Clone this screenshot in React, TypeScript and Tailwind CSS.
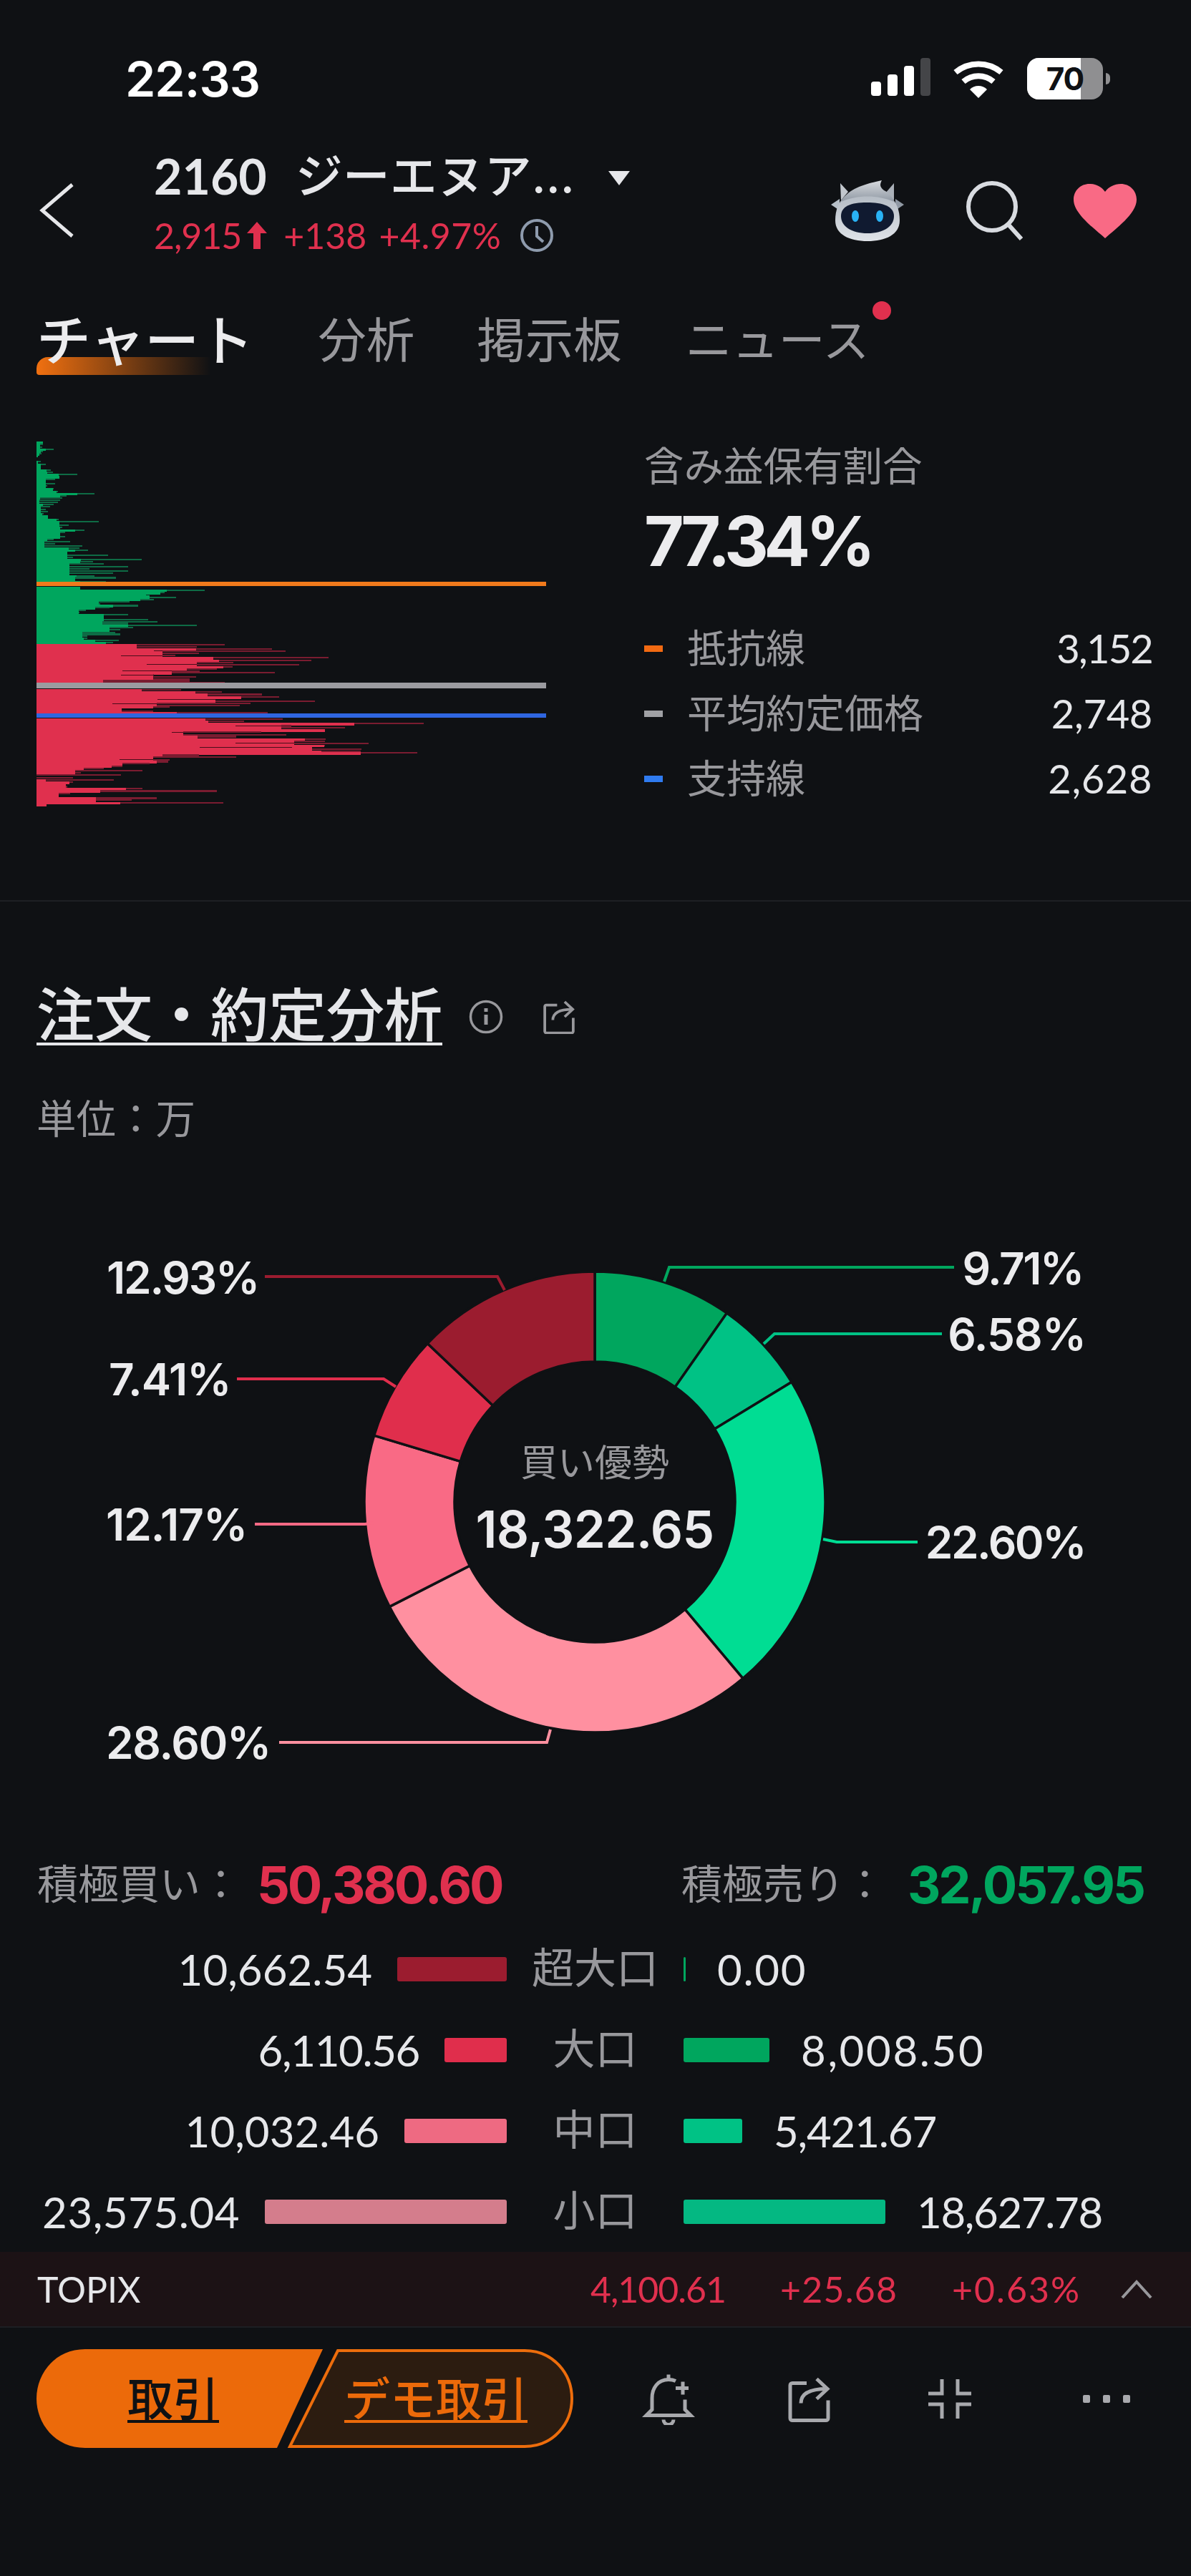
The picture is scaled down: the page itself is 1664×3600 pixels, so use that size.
import React from "react";

// [y, bright end, dark end] in the profile's own units
const GREEN_ROWS: number[][] = [
  [103,118,118],[112,110,118],[121,104,115],[130,125,147],[139,112,118],[148,108,114],[157,104,104],
  [178,104,112],[190,112,125],[199,104,108],[212,128,140],[220,130,145],[229,160,212],[236,162,162],
  [247,125,150],[255,118,125],[265,125,150],[273,118,130],[285,145,148],[295,155,158],[304,212,258],
  [312,165,182],[322,110,170],[330,108,165],[338,105,158],[346,118,148],[354,105,138],[365,112,125],
  [375,110,132],[383,115,120],[392,132,132],[405,155,160],[413,162,270],[427,160,188],[436,165,170],
  [447,205,232],[455,165,178],[463,112,112],[471,165,178],[482,130,148],[491,122,192],[500,112,150],
  [509,122,225],[517,188,218],[526,205,242],[534,110,140],[545,185,297],[553,185,200],[561,222,388],
  [570,220,255],[578,190,285],[590,190,350],[598,185,245],[606,190,350],[614,155,310],[625,210,258],
  [633,205,318],[642,158,200],[648,220,290],[670,220,220],[682,457,560],[690,440,450],[700,400,410],
  [709,410,482],[718,385,422],[727,260,355],[736,270,275],[742,310,378],[750,260,300],[760,190,235],
  [769,215,218],[778,285,350],[787,260,285],[797,285,405],[805,280,432],[812,272,350],[820,350,540],
  [828,258,365],[836,300,330],[846,195,315],[854,225,330],[862,155,240],[870,230,240],[878,260,325],
  [886,290,310],
];

const RED_ROWS: number[][] = [
  [894,375,615],[902,375,540],[911,538,745],[919,422,782],[928,445,545],[937,332,480],[946,585,900],
  [955,600,852],[964,540,640],[972,402,820],[981,612,637],[989,512,595],[997,335,548],[1004,470,752],
  [1013,332,422],[1021,420,537],[1030,420,520],[1036,282,520],[1044,240,615],[1071,388,497],[1080,536,608],
  [1089,568,718],[1098,660,765],[1108,432,590],[1116,590,862],[1125,308,687],[1133,430,657],[1138,420,465],
  [1146,207,330],[1154,333,420],[1160,485,733],[1186,562,775],[1194,570,668],[1203,970,1160],[1212,645,798],
  [1220,770,945],[1229,890,890],[1237,470,715],[1246,502,785],[1254,542,648],[1263,835,892],[1272,805,890],
  [1280,645,1010],[1288,888,890],[1296,548,800],[1304,855,990],[1312,880,988],[1318,988,1143],[1327,445,545],
  [1335,420,647],[1344,328,465],[1352,430,460],[1360,335,410],[1370,305,335],[1378,230,285],[1387,200,390],
  [1395,205,222],[1405,100,332],[1414,100,200],[1423,125,312],[1432,190,200],[1442,175,175],[1450,180,185],
  [1458,345,390],[1467,275,595],[1476,160,192],[1486,100,160],[1495,262,430],[1503,170,360],[1512,330,612],
  [1520,128,128],
];

const SEGMENTS = [
  { pct: 9.71, color: "#00a65e" },
  { pct: 6.58, color: "#00c285" },
  { pct: 22.6, color: "#00dd93" },
  { pct: 28.6, color: "#ff90a0" },
  { pct: 12.17, color: "#f96a85" },
  { pct: 7.41, color: "#e02e4c" },
  { pct: 12.93, color: "#9b1c2f" },
];

const LEADERS = [
  { points: "370,1784 695,1784 705,1803", color: "#9b1c2f" },
  { points: "331,1927 536,1927 553,1938", color: "#e02e4c" },
  { points: "356,2130 510,2130 522,2128", color: "#f96a85" },
  { points: "390,2435 764,2435 769,2417", color: "#ff90a0" },
  { points: "928,1791 935,1771 1333,1771", color: "#00a65e" },
  { points: "1067,1878 1082,1864 1316,1864", color: "#00c285" },
  { points: "1150,2151 1169,2155 1282,2155", color: "#00dd93" },
];

const ROWS = [
  { buy: "10,662.54", buyW: "w-[153px]", buyC: "bg-[#9b1c2f]", buyT: "", name: "超大口", sell: "0.00", sellW: "w-[3px]", sellC: "bg-[#00a65e]", sellT: "tracking-[1.7px]" },
  { buy: "6,110.56", buyW: "w-[87px]", buyC: "bg-[#e02e4c]", buyT: "tracking-[-1.4px]", name: "大口", sell: "8,008.50", sellW: "w-[120px]", sellC: "bg-[#00a65e]", sellT: "tracking-[2.6px]" },
  { buy: "10,032.46", buyW: "w-[143px]", buyC: "bg-[#ee6a82]", buyT: "", name: "中口", sell: "5,421.67", sellW: "w-[82px]", sellC: "bg-[#00c285]", sellT: "tracking-[-1.2px]" },
  { buy: "23,575.04", buyW: "w-[338px]", buyC: "bg-[#d47d8c]", buyT: "tracking-[0.5px]", name: "小口", sell: "18,627.78", sellW: "w-[282px]", sellC: "bg-[#04b882]", sellT: "tracking-[-1.4px]" },
];

function segmentPath(from: number, to: number) {
  const [cx, cy, R, r] = [831, 2099, 322, 196];
  const a0 = (from / 100) * Math.PI * 2;
  const a1 = (to / 100) * Math.PI * 2;
  const pt = (rad: number, a: number) => `${cx + rad * Math.sin(a)} ${cy - rad * Math.cos(a)}`;
  const large = to - from > 50 ? 1 : 0;
  return `M${pt(R, a0)} A${R} ${R} 0 ${large} 1 ${pt(R, a1)} L${pt(r, a1)} A${r} ${r} 0 ${large} 0 ${pt(r, a0)} Z`;
}

const ShareIcon = ({ className }: { className: string }) => (
  <svg viewBox="0 0 63 64" fill="none" stroke="currentColor" strokeWidth="5" className={className}>
    <path d="M28 10H8a3 3 0 0 0-3 3v46a3 3 0 0 0 3 3h47a3 3 0 0 0 3-3V34" />
    <path d="M20 38c0-12 10-20 36-20" />
    <path d="M42 4l15 14-15 14" />
  </svg>
);

const Robot = () => (
  <svg viewBox="0 0 102 85" className="h-[85px] w-[102px]">
    <defs>
      <linearGradient id="helmet" x1="0" y1="0" x2="0" y2="1">
        <stop offset="0" stopColor="#d7dade" />
        <stop offset="1" stopColor="#8f98a3" />
      </linearGradient>
      <linearGradient id="shell" x1="0" y1="0" x2="0" y2="1">
        <stop offset="0" stopColor="#aeb6bf" />
        <stop offset="1" stopColor="#dfe3e8" />
      </linearGradient>
    </defs>
    <path d="M14 28 L13 4 L24 16 Z" fill="#c2c7cd" />
    <path d="M88 28 L88 4 L76 18 Z" fill="#aab0b8" />
    <path d="M0 34 L12 26 L12 42 Z" fill="#b7c0c9" />
    <path d="M102 34 L90 26 L90 42 Z" fill="#8f98a3" />
    <path d="M6 56C6 26 26 12 51 12s45 14 45 44c0 20-20 29-45 29S6 76 6 56Z" fill="url(#shell)" />
    <path d="M14 30C24 12 44 6 71 0c-3 6-3 9 3 14 8 4 12 10 14 16-22-10-52-10-74 0Z" fill="url(#helmet)" />
    <path d="M14 50c0-14 14-19 36-19s38 5 38 19-14 24-37 24-37-10-37-24Z" fill="#101a30" />
    <ellipse cx="34" cy="50" rx="5" ry="8" fill="#29b2f5" />
    <ellipse cx="68" cy="50" rx="5" ry="8" fill="#29b2f5" />
  </svg>
);

export default function App() {
  const num = "font-['Lato','Noto_Sans_CJK_JP',sans-serif]";
  let acc = 0;

  return (
    <div className="flex h-[3600px] w-[1664px] flex-col overflow-hidden bg-[#0f1114] font-['Inter','Noto_Sans_CJK_JP',sans-serif] text-[#e6e7ea]">
      {/* ステータスバー */}
      <div className="flex h-[200px] shrink-0 items-start justify-between pl-[175px] pr-[113px] pt-[81px]">
        <span className="text-[68px] font-semibold leading-[58px] tracking-[-1px] text-white">22:33</span>
        <div className="flex items-center">
          <div className="flex h-[58px] items-end gap-[9px] pb-[5px]">
            <div className="h-[20px] w-[14px] rounded-[4px] bg-white" />
            <div className="h-[30px] w-[14px] rounded-[4px] bg-white" />
            <div className="h-[42px] w-[14px] rounded-[4px] bg-white" />
            <div className="h-[53px] w-[14px] rounded-[4px] bg-[#444548]" />
          </div>
          <svg viewBox="0 0 72 53" className="ml-[31px] h-[53px] w-[72px]" fill="none" stroke="#fff" strokeWidth="8">
            <path d="M4 17A50 50 0 0 1 68 17" />
            <path d="M15 30A32 32 0 0 1 57 30" />
            <path d="M36 53L24 41A17 17 0 0 1 48 41Z" fill="#fff" stroke="none" />
          </svg>
          <div className="relative ml-[32px] flex h-[58px] w-[106px] items-center justify-center overflow-hidden rounded-[16px] bg-[#8f8f91]">
            <div className="absolute inset-y-0 left-0 w-[75px] bg-white" />
            <span className="relative text-[44px] font-bold tracking-[-1px] text-[#0f1114]">70</span>
          </div>
          <div className="ml-[4px] h-[16px] w-[6px] rounded-r-full bg-[#8f8f91]" />
        </div>
      </div>

      {/* ヘッダー */}
      <div className="relative flex h-[170px] shrink-0 items-start">
        <svg viewBox="0 0 48 76" className="ml-[55px] mt-[56px] h-[76px] w-[48px]" fill="none" stroke="#e6e7ea" strokeWidth="5">
          <path d="M46 2L4 38l42 36" />
        </svg>
        <div className="ml-[112px] flex flex-col pt-[18px]">
          <div className="flex h-[56px] items-center">
            <span className={`${num} text-[68px] font-bold`}>2160</span>
            <span className="ml-[40px] text-[66px] font-medium">ジーエヌア…</span>
            <svg viewBox="0 0 30 20" className="ml-[47px] mt-[6px] h-[20px] w-[30px]" fill="#e6e7ea">
              <path d="M0 0h30L15 20Z" />
            </svg>
          </div>
          <div className="mt-[30px] flex h-[50px] items-center text-[50px] text-[#e0304e]">
            <span className={`${num} tracking-[-1px]`}>2,915</span>
            <svg viewBox="0 0 28 38" className="ml-[8px] h-[38px] w-[28px]" fill="#e0304e">
              <path d="M14 0l14 16H19v22h-10V16H0Z" />
            </svg>
            <span className={`${num} ml-[23px]`}>+138</span>
            <span className={`${num} ml-[17px] tracking-[0.5px]`}>+4.97%</span>
            <svg viewBox="0 0 48 48" className="ml-[26px] h-[48px] w-[48px]" fill="none" stroke="#8e9bad" strokeWidth="4">
              <circle cx="24" cy="24" r="21" />
              <path d="M24 11v14l9 8" />
            </svg>
          </div>
        </div>
        <div className="ml-auto mr-[76px] mt-[52px] flex items-start">
          <Robot />
          <svg viewBox="0 0 80 84" className="ml-[86px] h-[84px] w-[80px]" fill="none" stroke="#d8dbe0" strokeWidth="6">
            <circle cx="37" cy="37" r="33" />
            <path d="M60 62l18 20" />
          </svg>
          <svg viewBox="0 0 88 76" className="ml-[71px] mt-[5px] h-[76px] w-[88px]" fill="#f96a85">
            <path d="M44 76C30 63 0 42 0 22 0 9 10 0 22 0c9 0 17 4 22 11C49 4 57 0 66 0c12 0 22 9 22 22 0 20-30 41-44 54Z" />
          </svg>
        </div>
      </div>

      {/* タブ */}
      <div className="flex h-[190px] shrink-0 items-start pl-[51px] pt-[70px] text-[#98989c]">
        <div className="relative h-[72px]">
          <div className="absolute left-0 top-[59px] h-[25px] w-[244px] rounded-bl-[4px] rounded-tl-[16px] bg-gradient-to-r from-[#f07010] to-transparent" />
          <span className="relative block text-[76px] font-medium leading-[72px] text-[#ececee]">チャート</span>
        </div>
        <span className="ml-[90px] text-[67.5px] leading-[72px]">分析</span>
        <span className="ml-[87px] text-[67.5px] leading-[72px]">掲示板</span>
        <div className="relative ml-[89px]">
          <span className="text-[65px] leading-[72px]">ニュース</span>
          <div className="absolute right-[-30px] top-[-19px] h-[26px] w-[26px] rounded-full bg-[#e0304e]" />
        </div>
      </div>

      {/* 含み益プロファイル */}
      <div className="flex h-[700px] shrink-0 items-start border-b-2 border-[#1e2024] pl-[51px] pt-[56px]">
        <svg viewBox="100 100 1396 1430" preserveAspectRatio="none" shapeRendering="crispEdges" className="h-[511px] w-[712px] shrink-0">
          {[
            { rows: GREEN_ROWS, bright: "#00a65e", dark: "#0e6b45", gap: "#07351f" },
            { rows: RED_ROWS, bright: "#e0304e", dark: "#7a1c30", gap: "#4a0d1a" },
          ].map(({ rows, bright, dark, gap }) =>
            rows.map(([y, b, d], i) => {
              const prev = rows[i - 1];
              const next = rows[i + 1];
              const step = next ? next[0] - y : 8;
              // rows of a block overlap a little so the solid mass has no seams
              const h = step > 14 ? 8 : step + 1;
              const fill = prev && next ? Math.max(b, Math.min(prev[1], next[1])) : b;
              return (
                <g key={y}>
                  <rect x="100" y={y} width={d - 100} height={6} fill={dark} />
                  <rect x="100" y={y} width={fill - 100} height={h} fill={bright} />
                  {b < fill && b > 300 && <rect x={b} y={y + 2} width={Math.min(fill, d) - b} height={3} fill={gap} />}
                </g>
              );
            })
          )}
          <rect x="100" y="650" width="1396" height="18" fill="#f07a1c" />
          <rect x="100" y="1047" width="1396" height="20" fill="#9b9ba0" />
          <rect x="100" y="1167" width="1396" height="16" fill="#2f66e0" />
        </svg>
        <div className="ml-[137px] flex w-[710px] flex-col pt-[6px]">
          <span className="text-[55.5px] leading-[60px] text-[#98989c]">含み益保有割合</span>
          <span className="mt-[34px] text-[96px] font-bold leading-[80px] tracking-[-6.5px] text-[#ececee]">77.34%</span>
          <div className="mt-[80px] flex flex-col gap-[31px]">
            {[
              { c: "bg-[#f26a12]", label: "抵抗線", v: "3,152", t: "tracking-[-1.8px]" },
              { c: "bg-[#a0a1a5]", label: "平均約定価格", v: "2,748", t: "tracking-[-0.3px]" },
              { c: "bg-[#2f7bf0]", label: "支持線", v: "2,628", t: "tracking-[0.6px]" },
            ].map((r) => (
              <div key={r.label} className="flex h-[60px] items-center">
                <div className={`h-[9px] w-[26px] ${r.c}`} />
                <span className="ml-[34px] text-[55px] text-[#98989c]">{r.label}</span>
                <span className={`${num} ml-auto text-[56px] ${r.t} text-[#e6e7ea]`}>{r.v}</span>
              </div>
            ))}
          </div>
        </div>
      </div>

      {/* 注文・約定分析 */}
      <div className="flex h-[440px] shrink-0 flex-col pl-[51px] pt-[121px]">
        <div className="flex items-center">
          <span className="h-[80px] border-b-4 border-[#e6e7ea] text-[81px] font-medium leading-[76px]">注文・約定分析</span>
          <svg viewBox="0 0 48 48" className="ml-[37px] h-[48px] w-[48px]" fill="none" stroke="#98989c" strokeWidth="3.5">
            <circle cx="24" cy="24" r="21.5" />
            <path d="M24 21v14" strokeWidth="5" />
            <path d="M24 12v5" strokeWidth="5" />
          </svg>
          <ShareIcon className="ml-[54px] h-[48px] w-[48px] text-[#98989c]" />
        </div>
        <span className="mt-[76px] text-[55.5px] leading-[54px] text-[#98989c]">単位：万</span>
      </div>

      {/* ドーナツチャート */}
      <div className="relative h-[860px] w-[1664px] shrink-0">
        <svg viewBox="0 1700 1664 860" className="absolute inset-0 h-[860px] w-[1664px]">
          {SEGMENTS.map((s) => {
            const from = acc;
            acc += s.pct;
            return <path key={s.color} d={segmentPath(from, acc)} fill={s.color} stroke="#0f1114" strokeWidth="3.5" />;
          })}
          {LEADERS.map((l) => (
            <polyline key={l.color} points={l.points} fill="none" stroke={l.color} strokeWidth="4" />
          ))}
        </svg>
        <span className="absolute left-[149px] top-[85px] -translate-y-1/2 text-[62px] font-semibold tracking-[-2.2px] text-[#ececee]">12.93%</span>
        <span className="absolute left-[152px] top-[227px] -translate-y-1/2 text-[62px] font-semibold tracking-[-1px] text-[#ececee]">7.41%</span>
        <span className="absolute left-[148px] top-[430px] -translate-y-1/2 text-[62px] font-semibold tracking-[-1px] text-[#ececee]">12.17%</span>
        <span className="absolute left-[148px] top-[735px] -translate-y-1/2 text-[62px] font-semibold tracking-[-1.3px] text-[#ececee]">28.60%</span>
        <span className="absolute right-[151px] top-[72px] -translate-y-1/2 text-[62px] font-semibold tracking-[-2.4px] text-[#ececee]">9.71%</span>
        <span className="absolute right-[147px] top-[164px] -translate-y-1/2 text-[62px] font-semibold tracking-[-1px] text-[#ececee]">6.58%</span>
        <span className="absolute right-[148px] top-[455px] -translate-y-1/2 text-[62px] font-semibold tracking-[-2.5px] text-[#ececee]">22.60%</span>
        <span className="absolute left-[831px] top-[345px] -translate-x-1/2 -translate-y-1/2 whitespace-nowrap text-[52px] text-[#98989c]">買い優勢</span>
        <span className="absolute left-[831px] top-[437px] -translate-x-1/2 -translate-y-1/2 whitespace-nowrap text-[71px] font-semibold tracking-[-0.7px] text-[#ececee]">18,322.65</span>
      </div>

      {/* 積極買い・売り */}
      <div className="flex h-[135px] shrink-0 items-start pl-[52px] pt-[44px]">
        <div className="flex h-[60px] items-center">
          <span className="w-[307px] text-[57px] leading-[60px] text-[#98989c]">積極買い：</span>
          <span className="text-[72px] font-bold tracking-[-3.3px] text-[#e0304e]">50,380.60</span>
        </div>
        <div className="ml-auto mr-[66px] flex h-[60px] items-center">
          <span className="w-[316px] text-[57px] leading-[60px] text-[#98989c]">積極売り：</span>
          <span className="text-[72px] font-bold tracking-[-3px] text-[#00a65e]">32,057.95</span>
        </div>
      </div>

      <div className="h-[452px] shrink-0">
        {ROWS.map((r) => (
          <div key={r.name} className="flex h-[113px] items-center">
            <div className="flex w-[708px] items-center justify-end gap-[35px]">
              <span className={`${num} text-[60px] ${r.buyT} text-[#e6e7ea]`}>{r.buy}</span>
              <div className={`h-[34px] rounded-[3px] ${r.buyW} ${r.buyC}`} />
            </div>
            <span className="w-[247px] text-center text-[59px] text-[#98989c]">{r.name}</span>
            <div className="flex items-center gap-[44px]">
              <div className={`h-[34px] rounded-[3px] ${r.sellW} ${r.sellC}`} />
              <span className={`${num} text-[60px] ${r.sellT} text-[#e6e7ea]`}>{r.sell}</span>
            </div>
          </div>
        ))}
      </div>

      {/* TOPIX */}
      <div className="flex h-[106px] shrink-0 items-center border-b-2 border-[#1d1f23] bg-[#1c1215] pl-[52px] pr-[54px]">
        <span className={`${num} text-[50px] text-[#e6e7ea]`}>TOPIX</span>
        <div className={`${num} ml-auto flex text-[50px] text-[#e0304e]`}>
          <span className="tracking-[-1px]">4,100.61</span>
          <span className="ml-[76px] tracking-[1.2px]">+25.68</span>
          <span className="ml-[76px] tracking-[2px]">+0.63%</span>
        </div>
        <svg viewBox="0 0 44 26" className="ml-[56px] h-[26px] w-[44px]" fill="none" stroke="#98989c" strokeWidth="4">
          <path d="M2 25L22 3l20 22" />
        </svg>
      </div>

      {/* 下部バー */}
      <div className="flex shrink-0 items-start pl-[51px] pt-[30px] text-[#a8a9ad]">
        <div className="relative flex h-[138px] w-[750px]">
          <svg viewBox="0 0 750 138" className="absolute inset-0 h-[138px] w-[750px]">
            <path d="M68 0H400L336 138H68C26 138 0 104 0 69S26 0 68 0Z" fill="#ec6a0a" />
            <path d="M421 2H682C722 2 748 34 748 69S722 136 682 136H354Z" fill="#2c1c10" stroke="#ed6d0c" strokeWidth="4" />
          </svg>
          <span className="relative ml-[127px] mt-[41px] h-[62px] border-b-4 border-[#0f1114] text-[64px] font-medium leading-[58px] text-[#0f1114]">取引</span>
          <span className="relative ml-[175px] mt-[41px] h-[62px] border-b-4 border-[#ec6a0a] text-[64px] font-medium leading-[58px] text-[#ec6a0a]">デモ取引</span>
        </div>
        <svg viewBox="0 0 74 70" className="ml-[96px] mt-[33px] h-[73px] w-[74px]" fill="none" stroke="currentColor" strokeWidth="5">
          <path d="M37 1v7" />
          <path d="M47 10C43 8 40 8 37 8 22 8 14 20 14 34v16l-8 8h62l-8-8V36" />
          <path d="M47 20h18M57 11v18" />
          <path d="M30 64a7 7 0 0 0 14 0" />
        </svg>
        <ShareIcon className="ml-[128px] mt-[36px] h-[67px] w-[63px]" />
        <svg viewBox="0 0 64 59" className="ml-[133px] mt-[39px] h-[61px] w-[64px]" fill="none" stroke="currentColor" strokeWidth="5">
          <path d="M21 2v20H2M43 2v20h19M2 37h19v20M62 37H43v20" />
        </svg>
        <div className="ml-[154px] mt-[64px] flex gap-[18px]">
          <div className="h-[11px] w-[10px] rounded-[2px] bg-[#a8a9ad]" />
          <div className="h-[11px] w-[10px] rounded-[2px] bg-[#a8a9ad]" />
          <div className="h-[11px] w-[10px] rounded-[2px] bg-[#a8a9ad]" />
        </div>
      </div>
    </div>
  );
}
